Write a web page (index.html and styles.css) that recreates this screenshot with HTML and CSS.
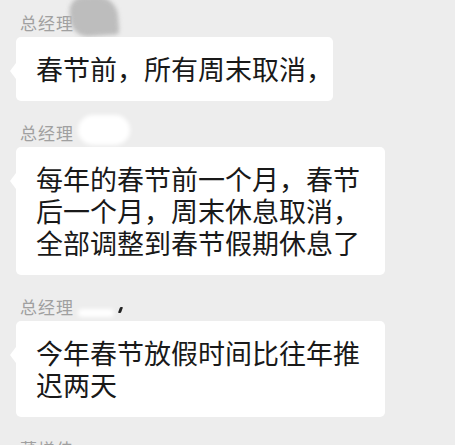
FILE: index.html
```html
<!DOCTYPE html>
<html>
<head>
    <meta charset="utf-8">
    <title>聊天记录</title>
    <link rel="stylesheet" href="styles.css">
</head>
<body>
    <div class="chat">
        <div class="msg">
            <div class="name">总经理<span class="smudge gray"></span></div>
            <div class="bubble tight">春节前，所有周末取消，</div>
        </div>
        <div class="msg">
            <div class="name">总经理<span class="smudge white"></span></div>
            <div class="bubble">每年的春节前一个月，春节后一个月，周末休息取消，全部调整到春节假期休息了</div>
        </div>
        <div class="msg">
            <div class="name">总经理<span class="smudge thin"></span><span class="dot"></span></div>
            <div class="bubble">今年春节放假时间比往年推迟两天</div>
        </div>
        <div class="msg">
            <div class="name">董增佳</div>
        </div>
    </div>
</body>
</html>
```

FILE: styles.css
```css
html, body {
    margin: 0;
    padding: 0;
    background: #ededed;
    overflow: hidden;
}
.chat {
    display: flex;
    flex-direction: column;
    gap: 21px;
    padding: 12px 0 0 16px;
    font-family: "Noto Sans CJK SC", "Noto Sans", sans-serif;
}
.msg {
    display: flex;
    flex-direction: column;
    align-items: flex-start;
    gap: 3px;
}
.name {
    position: relative;
    font-size: 17px;
    line-height: 22px;
    letter-spacing: 1px;
    color: #a0a0a0;
    padding-left: 4px;
}
.smudge {
    position: absolute;
    display: block;
    filter: blur(2px);
}
.smudge.gray {
    left: 54px;
    top: -16px;
    width: 48px;
    height: 40px;
    background: #bdbdbd;
    border-radius: 14px 22px 4px 18px;
    transform: rotate(-4deg);
}
.smudge.white {
    left: 62px;
    top: -7px;
    width: 52px;
    height: 30px;
    background: #ffffff;
    border-radius: 15px;
}
.smudge.thin {
    left: 62px;
    top: 13px;
    width: 36px;
    height: 8px;
    background: #ffffff;
    border-radius: 4px;
}
.dot {
    position: absolute;
    left: 103px;
    top: 11px;
    width: 3px;
    height: 6px;
    background: #222;
    border-radius: 1px;
    transform: skewX(-20deg);
}
.bubble {
    position: relative;
    box-sizing: border-box;
    max-width: 369px;
    padding: 16px 24px 16px 20px;
    background: #ffffff;
    border-radius: 5px;
    font-size: 27px;
    line-height: 32px;
    color: #191919;
}
.bubble.tight {
    padding-right: 0;
}
.bubble::before {
    content: "";
    position: absolute;
    left: -6px;
    top: 26px;
    border-top: 8px solid transparent;
    border-bottom: 8px solid transparent;
    border-right: 6px solid #ffffff;
}
```
